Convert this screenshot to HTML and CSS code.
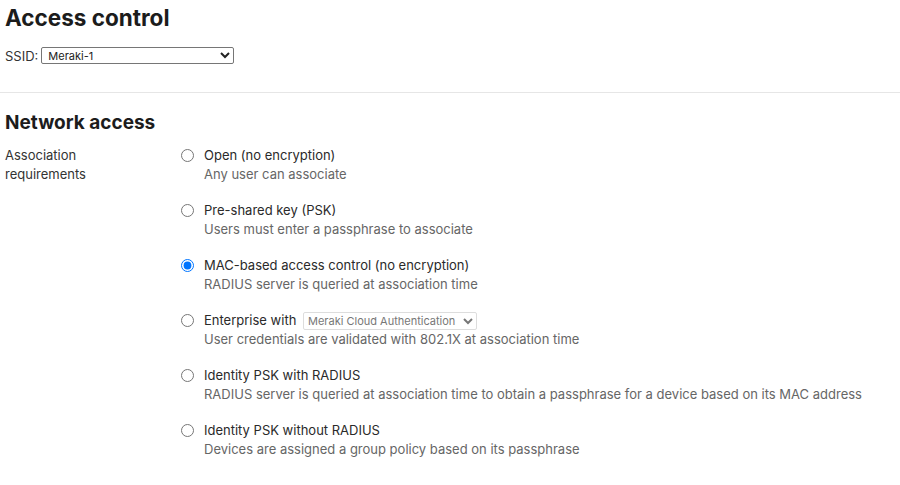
FILE: index.html
```html
<!DOCTYPE html>
<html lang="en">
<head>
<meta charset="UTF-8">
<title>Access control</title>
<link rel="stylesheet" href="styles.css">
</head>
<body>
  <div class="page">
    <h1 class="title">Access control</h1>
    <div class="ssid-row">
      <label for="ssid">SSID:</label>
      <select id="ssid" class="ssid-select">
        <option>Meraki-1</option>
      </select>
    </div>
  </div>
  <hr class="divider">
  <div class="page">
    <h2 class="section-title">Network access</h2>
    <div class="field">
      <div class="field-label">Association<br>requirements</div>
      <div class="options">
        <label class="option">
          <input type="radio" name="assoc">
          <span class="option-text">
            <span class="option-title">Open (no encryption)</span>
            <span class="option-desc">Any user can associate</span>
          </span>
        </label>
        <label class="option">
          <input type="radio" name="assoc">
          <span class="option-text">
            <span class="option-title">Pre-shared key (PSK)</span>
            <span class="option-desc">Users must enter a passphrase to associate</span>
          </span>
        </label>
        <label class="option">
          <input type="radio" name="assoc" checked>
          <span class="option-text">
            <span class="option-title">MAC-based access control (no encryption)</span>
            <span class="option-desc">RADIUS server is queried at association time</span>
          </span>
        </label>
        <label class="option">
          <input type="radio" name="assoc">
          <span class="option-text">
            <span class="option-title">Enterprise with
              <select class="auth-select">
                <option>Meraki Cloud Authentication</option>
              </select>
            </span>
            <span class="option-desc">User credentials are validated with 802.1X at association time</span>
          </span>
        </label>
        <label class="option">
          <input type="radio" name="assoc">
          <span class="option-text">
            <span class="option-title">Identity PSK with RADIUS</span>
            <span class="option-desc">RADIUS server is queried at association time to obtain a passphrase for a device based on its MAC address</span>
          </span>
        </label>
        <label class="option">
          <input type="radio" name="assoc">
          <span class="option-text">
            <span class="option-title">Identity PSK without RADIUS</span>
            <span class="option-desc">Devices are assigned a group policy based on its passphrase</span>
          </span>
        </label>
      </div>
    </div>
  </div>
</body>
</html>
```

FILE: styles.css
```css
body {
  margin: 0;
  font-family: Inter, "Noto Sans", sans-serif;
  font-size: 13px;
  color: #333;
  background: #fff;
}
.page {
  padding: 0 5px;
}
.title {
  margin: 0;
  padding-top: 5px;
  font-size: 22.5px;
  font-weight: 700;
  line-height: 26px;
  color: #1c1c1c;
}
.ssid-row {
  display: flex;
  align-items: center;
  gap: 3px;
  margin-top: 16px;
}
.ssid-select {
  width: 193px;
  height: 17px;
  font-family: Inter, sans-serif;
  font-size: 11px;
  padding: 0 2px;
  border: 1px solid #767676;
  border-radius: 2px;
  background: #fff;
  color: #222;
}
.divider {
  margin: 28px 0 0;
  border: 0;
  border-top: 1px solid #e6e6e6;
}
.section-title {
  margin: 17px 0 0;
  font-size: 19px;
  font-weight: 700;
  line-height: 26px;
  color: #1c1c1c;
}
.field {
  display: flex;
  margin-top: 10px;
}
.field-label {
  width: 176px;
  line-height: 19px;
  color: #333;
}
.options {
  display: flex;
  flex-direction: column;
  gap: 17px;
}
.option {
  display: flex;
  align-items: flex-start;
  gap: 10px;
}
.option input {
  margin: 3px 0 0 0;
  width: 13px;
  height: 13px;
}
.option-text {
  display: flex;
  flex-direction: column;
}
.option-title {
  line-height: 19px;
  color: #2a2a2a;
}
.option-desc {
  line-height: 19px;
  color: #666;
}
.auth-select {
  margin-left: 3px;
  width: 174px;
  height: 18px;
  font-family: Inter, sans-serif;
  font-size: 11px;
  color: #777;
  border: 1px solid #ddd;
  border-radius: 2px;
  background: #fff;
}
```
